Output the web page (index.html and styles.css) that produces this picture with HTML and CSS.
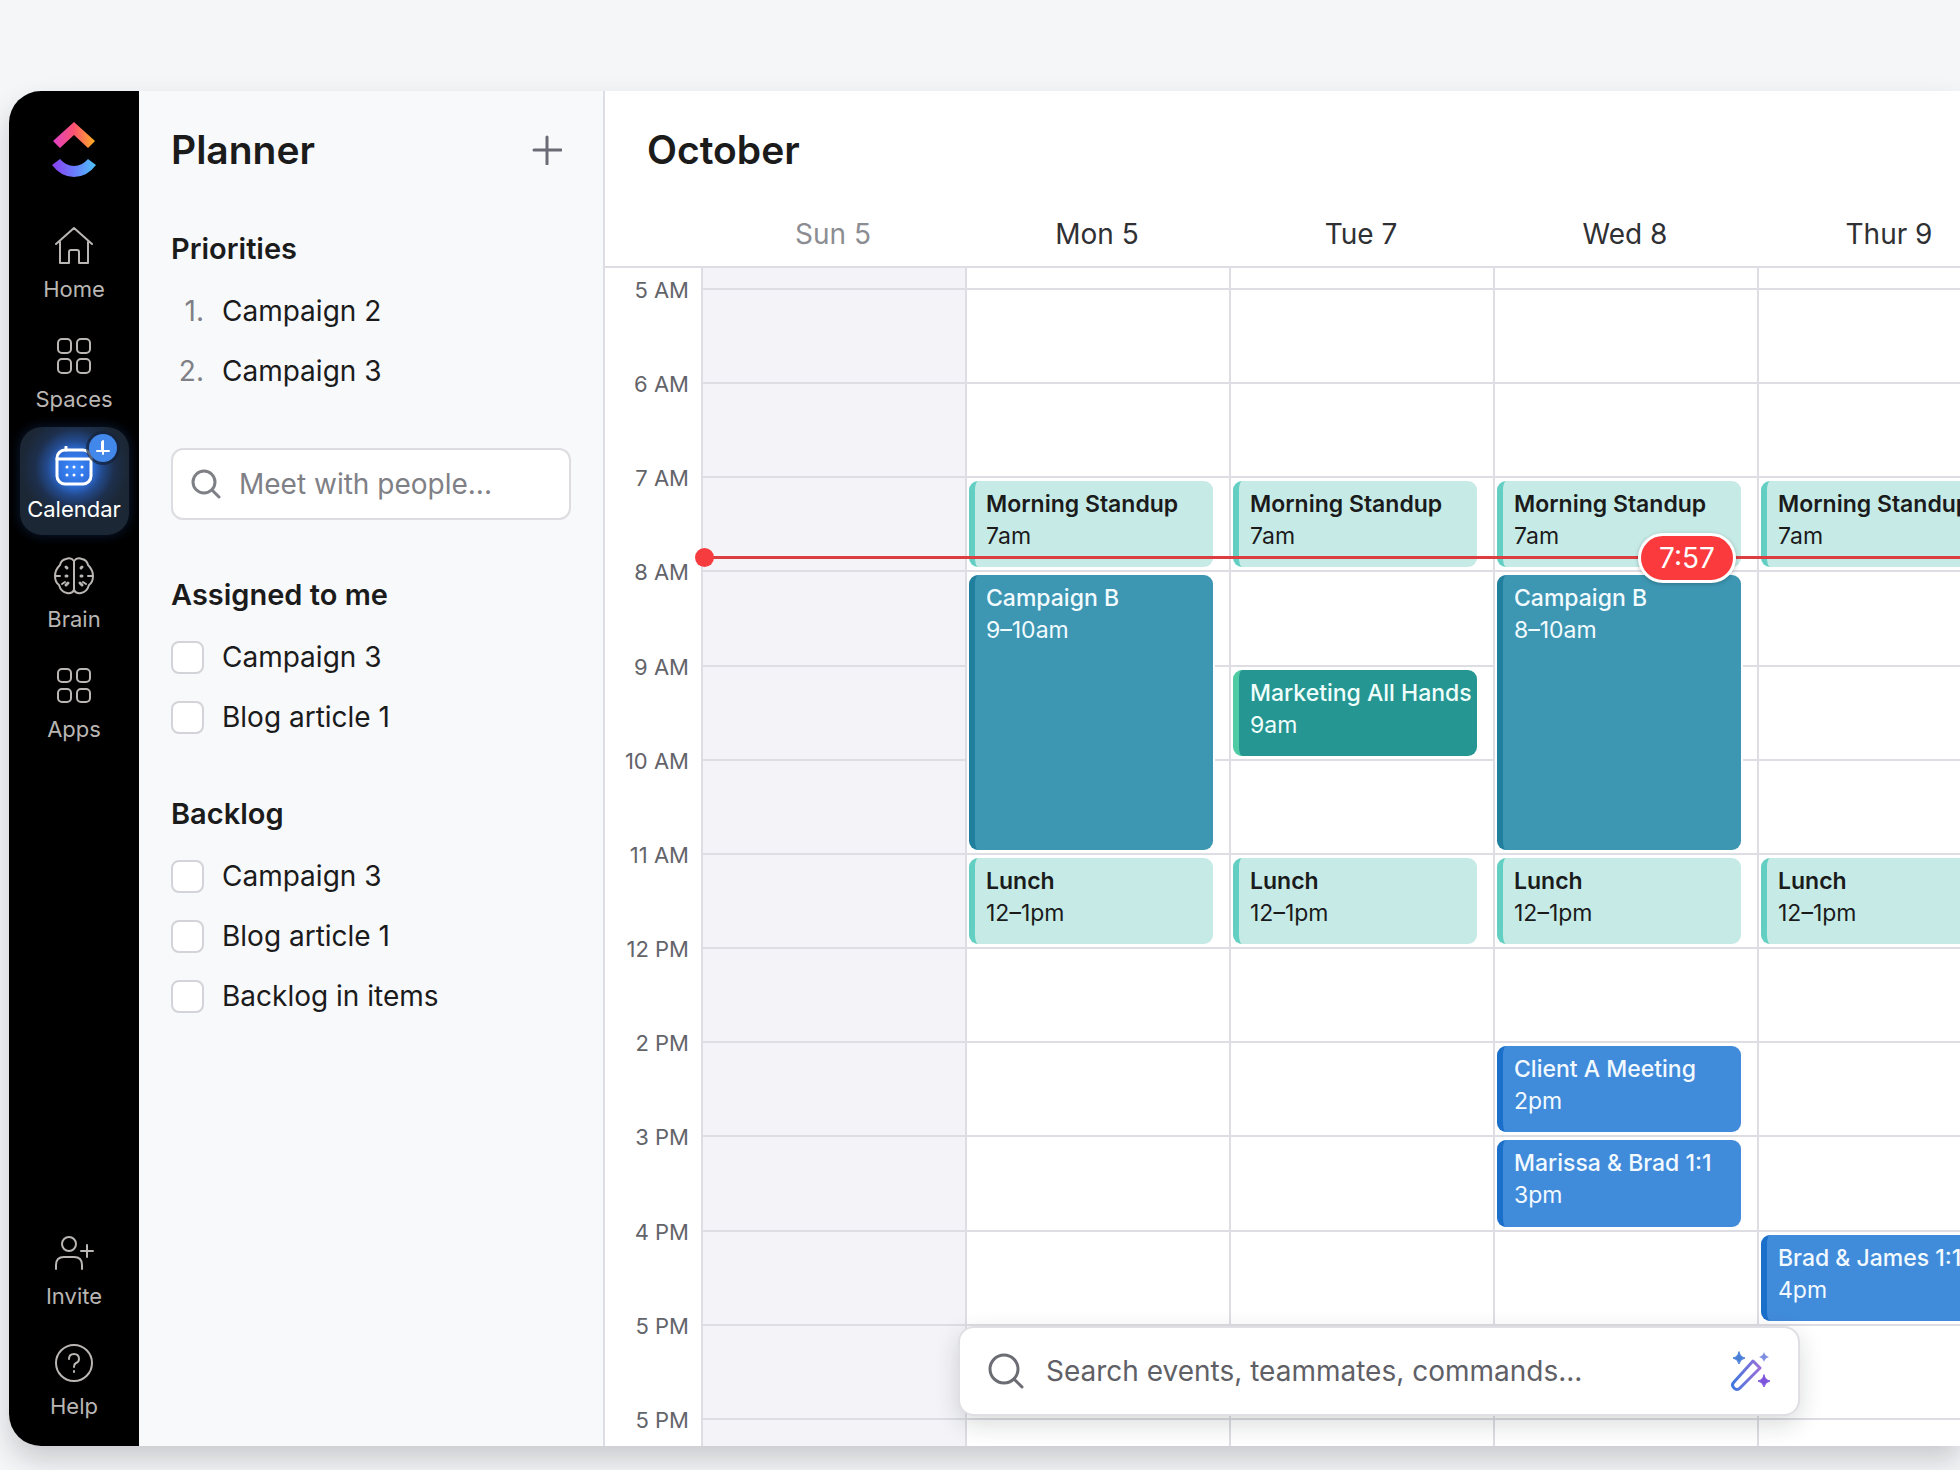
FILE: index.html
```html
<!DOCTYPE html>
<html lang="en">

<head>
    <meta charset="UTF-8">
    <meta name="viewport" content="width=device-width, initial-scale=1.0">
    <title>Planner</title>
    <link rel="stylesheet" href="styles.css">
</head>

<body>
    <div class="window">
        <nav class="sidebar">
            <a class="logo" href="#" aria-label="Home page">
                <svg width="44" height="56" viewBox="0 0 44 56">
                    <defs>
                        <linearGradient id="logo-top" x1="0" y1="0" x2="1" y2="0">
                            <stop offset="0" stop-color="#e040c8" />
                            <stop offset="0.5" stop-color="#fb5370" />
                            <stop offset="1" stop-color="#ffb020" />
                        </linearGradient>
                        <linearGradient id="logo-bottom" x1="0" y1="0" x2="1" y2="0">
                            <stop offset="0" stop-color="#8a3ff0" />
                            <stop offset="0.5" stop-color="#6a7bff" />
                            <stop offset="1" stop-color="#4cc4f5" />
                        </linearGradient>
                    </defs>
                    <path d="M1 19 22 0 43 19 36 26 22 13 8 26Z" fill="url(#logo-top)" />
                    <path d="M0 43 8 37Q14 44 22 44T36 37L44 43Q35 55 22 55T0 43Z" fill="url(#logo-bottom)" />
                </svg>
            </a>
            <a class="nav-item" href="#">
                <svg class="nav-icon" viewBox="0 0 40 40">
                    <path d="M2 18 20 2l18 16M6 16v21h9V26q0-2 2-2h6q2 0 2 2v11h9V16" />
                </svg>
                <span>Home</span>
            </a>
            <a class="nav-item" href="#">
                <svg class="nav-icon" viewBox="0 0 40 40">
                    <rect x="4" y="3" width="13" height="14" rx="4" />
                    <rect x="23" y="3" width="13" height="14" rx="4" />
                    <rect x="4" y="23" width="13" height="14" rx="4" />
                    <rect x="23" y="23" width="13" height="14" rx="4" />
                </svg>
                <span>Spaces</span>
            </a>
            <a class="nav-item active" href="#">
                <svg class="nav-icon" viewBox="0 0 40 40">
                    <rect x="3" y="4" width="34" height="34" rx="8" />
                    <path d="M3 13h34M12 1v3" />
                    <path class="dots" d="M13 21h0M20 21h0M28 21h0M13 29h0M20 29h0M28 29h0" />
                </svg>
                <span>Calendar</span>
                <i class="nav-badge">
                    <svg width="16" height="18" viewBox="0 0 16 18">
                        <path d="M8 2v13M7 3v9M2 12h12" />
                    </svg>
                </i>
            </a>
            <a class="nav-item" href="#">
                <svg class="nav-icon" viewBox="0 0 40 40">
                    <path d="M20 5q-3-4-8-2-5 1-6 6-5 5-5 11 0 6 4 9 2 7 8 8 5 1 7-3zM20 5q3-4 8-2 5 1 6 6 5 5 5 11 0 6-4 9-2 7-8 8-5 1-7-3z" />
                    <path class="dots" d="M12 11l1 1M12 20h1M12 29l2-2M28 11l-1 1M28 20h-1M28 29l-2-2" />
                    <path d="M2 20h4M38 20h-4M8 28l3-2M32 28l-3-2" />
                </svg>
                <span>Brain</span>
            </a>
            <a class="nav-item" href="#">
                <svg class="nav-icon" viewBox="0 0 40 40">
                    <rect x="4" y="3" width="13" height="13" rx="4" />
                    <rect x="23" y="3" width="13" height="13" rx="4" />
                    <rect x="4" y="23" width="13" height="13" rx="4" />
                    <rect x="23" y="23" width="13" height="13" rx="4" />
                </svg>
                <span>Apps</span>
            </a>
            <a class="nav-item push" href="#">
                <svg class="nav-icon" viewBox="0 0 40 40">
                    <circle cx="15" cy="11" r="7" />
                    <path d="M2 36v-4q0-8 8-8h10q8 0 8 8v4M33 12v12M27 18h12" />
                </svg>
                <span>Invite</span>
            </a>
            <a class="nav-item" href="#">
                <svg class="nav-icon" viewBox="0 0 40 40">
                    <circle cx="20" cy="20" r="18" />
                    <path d="M15 16q0-5 5-5t5 5q0 3-3 4-2 1-2 4M20 28v1" />
                </svg>
                <span>Help</span>
            </a>
        </nav>

        <aside class="planner">
            <header class="planner-header">
                <h1>Planner</h1>
                <button class="add" type="button" aria-label="Add">
                    <svg width="30" height="30" viewBox="0 0 30 30">
                        <path d="M15 2v27M2 15h27" />
                    </svg>
                </button>
            </header>
            <section>
                <h2>Priorities</h2>
                <ol class="list">
                    <li><span class="num">1.</span>Campaign 2</li>
                    <li><span class="num">2.</span>Campaign 3</li>
                </ol>
            </section>
            <label class="people">
                <svg width="30" height="30" viewBox="0 0 30 30">
                    <circle cx="13" cy="13" r="11" />
                    <path d="M21 21l7 7" />
                </svg>
                <input type="text" placeholder="Meet with people..." aria-label="Meet with people">
            </label>
            <section>
                <h2>Assigned to me</h2>
                <ul class="list">
                    <li><label><input type="checkbox">Campaign 3</label></li>
                    <li><label><input type="checkbox">Blog article 1</label></li>
                </ul>
            </section>
            <section>
                <h2>Backlog</h2>
                <ul class="list">
                    <li><label><input type="checkbox">Campaign 3</label></li>
                    <li><label><input type="checkbox">Blog article 1</label></li>
                    <li><label><input type="checkbox">Backlog in items</label></li>
                </ul>
            </section>
        </aside>

        <main class="calendar">
            <header class="calendar-header">
                <h1>October</h1>
                <div class="days">
                    <span class="weekend">Sun 5</span>
                    <span>Mon 5</span>
                    <span>Tue 7</span>
                    <span>Wed 8</span>
                    <span>Thur 9</span>
                </div>
            </header>
            <div class="grid">
                <div class="col sun"></div>
                <div class="col mon"></div>
                <div class="col tue"></div>
                <div class="col wed"></div>
                <div class="col thu"></div>

                <div class="hour h1"><span>5 AM</span></div>
                <div class="hour h2"><span>6 AM</span></div>
                <div class="hour h3"><span>7 AM</span></div>
                <div class="hour h4"><span>8 AM</span></div>
                <div class="hour h5"><span>9 AM</span></div>
                <div class="hour h6"><span>10 AM</span></div>
                <div class="hour h7"><span>11 AM</span></div>
                <div class="hour h8"><span>12 PM</span></div>
                <div class="hour h9"><span>2 PM</span></div>
                <div class="hour h10"><span>3 PM</span></div>
                <div class="hour h11"><span>4 PM</span></div>
                <div class="hour h12"><span>5 PM</span></div>
                <div class="hour h13"><span>5 PM</span></div>

                <div class="event mint mon h3"><b>Morning Standup</b><span>7am</span></div>
                <div class="event sea mon h4 long"><b>Campaign B</b><span>9–10am</span></div>
                <div class="event mint mon h7"><b>Lunch</b><span>12–1pm</span></div>

                <div class="event mint tue h3"><b>Morning Standup</b><span>7am</span></div>
                <div class="event green tue h5"><b>Marketing All Hands</b><span>9am</span></div>
                <div class="event mint tue h7"><b>Lunch</b><span>12–1pm</span></div>

                <div class="event mint wed h3"><b>Morning Standup</b><span>7am</span></div>
                <div class="event sea wed h4 long"><b>Campaign B</b><span>8–10am</span></div>
                <div class="event mint wed h7"><b>Lunch</b><span>12–1pm</span></div>
                <div class="event blue wed h9"><b>Client A Meeting</b><span>2pm</span></div>
                <div class="event blue wed h10"><b>Marissa &amp; Brad 1:1</b><span>3pm</span></div>

                <div class="event mint thu h3"><b>Morning Standup</b><span>7am</span></div>
                <div class="event mint thu h7"><b>Lunch</b><span>12–1pm</span></div>
                <div class="event blue thu h11"><b>Brad &amp; James 1:1</b><span>4pm</span></div>

                <div class="now h3"></div>
                <div class="now-time wed h3">7:57</div>
            </div>

            <div class="command">
                <svg width="36" height="36" viewBox="0 0 36 36">
                    <circle cx="16" cy="16" r="14" />
                    <path d="M26 26l8 8" />
                </svg>
                <input type="text" placeholder="Search events, teammates, commands..." aria-label="Search">
                <button class="magic" type="button" aria-label="AI commands">
                    <svg width="40" height="40" viewBox="0 0 40 40">
                        <defs>
                            <linearGradient id="wand" x1="0" y1="0" x2="1" y2="0">
                                <stop offset="0" stop-color="#3f78e0" />
                                <stop offset="1" stop-color="#9a70d8" />
                            </linearGradient>
                        </defs>
                        <path d="M22 10l7 7L9 37q-3 3-6 0t0-6z" fill="none" stroke="url(#wand)" stroke-width="3" stroke-linejoin="round" />
                        <path d="M8 1q1 5 6 6-5 1-6 6-1-5-6-6 5-1 6-6z" fill="#4a7fd8" stroke="#4a7fd8" stroke-width="1" />
                        <path d="M33 1q1 4 5 5-4 1-5 5-1-4-5-5 4-1 5-5z" fill="#7f8fe0" />
                        <path d="M33 24q1 5 6 6-5 1-6 6-1-5-6-6 5-1 6-6z" fill="#7d55dd" stroke="#7d55dd" stroke-width="1" />
                    </svg>
                </button>
            </div>
        </main>
    </div>
</body>

</html>
```
FILE: styles.css
```css
:root {
    --text: #1b1b1c;
    --muted: #7f8086;
    --line: #dddde3;
    --panel: #f8f9fb;
}

* {
    padding: 0;
    margin: 0;
    box-sizing: border-box;
}

body {
    display: flex;
    min-height: 100vh;
    overflow-x: hidden;
    padding: 91px 0 24px 9px;
    background-color: #f5f6f8;
    color: var(--text);
    font-family: Inter, "Liberation Sans", sans-serif;
    font-size: 28px;
}

input,
button {
    border: 0;
    background: none;
    font: inherit;
    color: inherit;
}

svg {
    flex: none;
    fill: none;
    stroke-linecap: round;
}

h1 {
    font-size: 39px;
    font-weight: 600;
    line-height: 48px;
}

h2 {
    font-size: 29px;
    font-weight: 600;
    line-height: 40px;
}

.window {
    display: flex;
    flex: 1;
    min-width: 0;
    overflow: hidden;
    border-radius: 32px 0 0 32px;
    background-color: #fff;
    box-shadow: 0 14px 28px rgba(30, 32, 40, 0.2);
}

/* sidebar */
.sidebar {
    display: flex;
    flex: none;
    flex-direction: column;
    align-items: center;
    gap: 2px;
    width: 130px;
    padding: 31px 0 14px;
    background-color: #000;
}

.logo {
    display: block;
    height: 56px;
    margin-bottom: 27px;
}

.nav-item {
    position: relative;
    display: flex;
    flex-direction: column;
    align-items: center;
    gap: 8px;
    width: 109px;
    height: 108px;
    padding-top: 19px;
    border-radius: 22px;
    color: #b9b6b3;
    font-size: 22px;
    line-height: 30px;
    text-decoration: none;
}

.nav-item.push {
    margin-top: auto;
}

.nav-icon {
    width: 40px;
    height: 40px;
    stroke: currentColor;
    stroke-width: 2;
    stroke-linejoin: round;
}

.nav-item.active {
    background: radial-gradient(circle at 50% 38%, #3f8cff 0, #2e6fdc 20%, #234a8c 32%, #1d2f4c 46%, #1c2735 62%);
    box-shadow: 0 0 12px rgba(30, 70, 140, 0.4);
    color: #fff;
}

.active .nav-icon,
.dots {
    stroke-width: 3;
}

.nav-badge {
    position: absolute;
    top: 7px;
    right: 12px;
    display: flex;
    justify-content: center;
    align-items: center;
    width: 28px;
    height: 28px;
    border-radius: 50%;
    background-color: #4287ea;
    box-shadow: 0 0 0 3px rgba(20, 34, 60, 0.7);
}

.nav-badge svg {
    stroke: #fff;
    stroke-width: 2;
}

/* planner */
.planner {
    flex: none;
    width: 466px;
    padding: 0 32px;
    border-right: 2px solid var(--line);
    background-color: var(--panel);
}

.planner-header {
    display: flex;
    justify-content: space-between;
    align-items: center;
    height: 117px;
    margin-bottom: 21px;
}

.add {
    display: flex;
    padding: 9px;
    stroke: #6b6b75;
    stroke-width: 3;
}

.planner section {
    margin-bottom: 47px;
}

.list {
    margin-top: 12px;
    list-style: none;
}

.list li,
.list label {
    display: flex;
    align-items: center;
    height: 60px;
}

.num {
    width: 51px;
    padding-right: 18px;
    color: var(--muted);
    text-align: right;
}

.list input {
    appearance: none;
    width: 33px;
    height: 33px;
    margin-right: 18px;
    border: 2px solid #d3d3d9;
    border-radius: 8px;
    background-color: #fff;
}

.people {
    display: flex;
    align-items: center;
    gap: 18px;
    height: 72px;
    margin-bottom: 55px;
    padding: 0 18px;
    border: 2px solid #dcdce1;
    border-radius: 12px;
    background-color: #fff;
    stroke: var(--muted);
    stroke-width: 3;
}

.people input,
.command input {
    flex: 1;
    min-width: 0;
}

::placeholder {
    color: var(--muted);
    opacity: 1;
}

/* calendar */
.calendar {
    position: relative;
    display: flex;
    flex: 1;
    flex-direction: column;
    min-width: 0;
}

.calendar-header {
    border-bottom: 2px solid var(--line);
}

.calendar-header h1 {
    padding: 35px 42px 33px;
}

.days,
.grid {
    display: grid;
    grid-template-columns: 96px repeat(5, minmax(264px, 1fr));
}

.days {
    height: 59px;
    color: #2f3033;
    line-height: 54px;
    text-align: center;
}

.days .weekend {
    grid-column: 2;
    color: #8c8d92;
}

.grid {
    flex: 1;
    grid-template-rows: 20px repeat(12, minmax(94px, 1fr)) 28px;
}

.sun { grid-column: 2; }
.mon { grid-column: 3; }
.tue { grid-column: 4; }
.wed { grid-column: 5; }
.thu { grid-column: 6; }

.h1 { grid-row: 2; }
.h2 { grid-row: 3; }
.h3 { grid-row: 4; }
.h4 { grid-row: 5; }
.h5 { grid-row: 6; }
.h6 { grid-row: 7; }
.h7 { grid-row: 8; }
.h8 { grid-row: 9; }
.h9 { grid-row: 10; }
.h10 { grid-row: 11; }
.h11 { grid-row: 12; }
.h12 { grid-row: 13; }
.h13 { grid-row: 14; }

.col {
    grid-row: 1 / -1;
    border-left: 2px solid var(--line);
}

.col.sun {
    background-color: #f4f4f8;
}

.hour {
    display: grid;
    grid-column: 1 / -1;
    grid-template-columns: 96px 1fr;
    height: 0;
    color: #63646a;
    font-size: 22px;
    line-height: 4px;
    text-align: right;
}

.hour span {
    padding-right: 12px;
}

/* hour line, starts right after the time label */
.hour::after {
    content: "";
    height: 2px;
    background-color: var(--line);
}

.event {
    z-index: 1;
    display: flex;
    flex-direction: column;
    margin: 5px 16px 3px 4px;
    padding: 7px 0 0 11px;
    border-left: 6px solid;
    border-radius: 9px;
    box-shadow: 0 0 0 2px #fff;
    font-size: 23px;
    line-height: 32px;
    white-space: nowrap;
}

.event b {
    font-weight: 500;
}

.event.long {
    grid-row-end: span 3;
}

.mint {
    border-color: #62cfc2;
    background-color: #c6ebe7;
}

.mint b {
    font-weight: 600;
}

.sea {
    border-color: #1f7f9c;
    background-color: #3d97b3;
    color: #f2fbff;
}

.green {
    border-color: #4fcba4;
    background-color: #259692;
    color: #f0fffc;
}

.blue {
    border-color: #1a6fca;
    background-color: #418bdb;
    color: #f2faff;
}

/* current time */
.now {
    position: relative;
    z-index: 2;
    grid-column: 2 / -1;
    align-self: end;
    height: 3px;
    margin-bottom: 11px;
    background-color: #dc3d40;
}

.now::before {
    content: "";
    position: absolute;
    top: -8px;
    left: -6px;
    width: 19px;
    height: 19px;
    border-radius: 50%;
    background-color: #f73c40;
}

.now-time {
    z-index: 3;
    align-self: end;
    justify-self: end;
    width: 98px;
    margin: 0 21px -13px 0;
    border: 3px solid #fff;
    border-radius: 25px;
    background-color: #fb3a3d;
    box-shadow: 0 1px 4px rgba(0, 0, 0, 0.25);
    color: #fff;
    line-height: 44px;
    text-align: center;
}

/* floating search */
.command {
    position: absolute;
    z-index: 4;
    bottom: 30px;
    left: 353px;
    display: flex;
    align-items: center;
    gap: 22px;
    width: 842px;
    height: 90px;
    padding: 0 27px 0 28px;
    border: 2px solid #dfdfe4;
    border-radius: 16px;
    background-color: #fff;
    box-shadow: 0 8px 24px rgba(20, 22, 30, 0.16);
    stroke: #6c6d74;
    stroke-width: 3;
}

.command ::placeholder {
    color: #5f6066;
}

.magic {
    display: flex;
    stroke: none;
}
```
